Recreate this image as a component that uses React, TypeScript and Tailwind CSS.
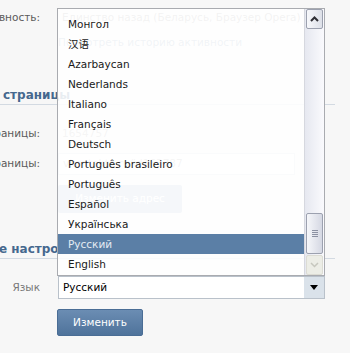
const LANGS = [
  'Монгол',
  '汉语',
  'Azarbaycan',
  'Nederlands',
  'Italiano',
  'Français',
  'Deutsch',
  'Português brasileiro',
  'Português',
  'Español',
  'Українська',
  'Русский',
  'English',
];

const FONT = { fontFamily: '"DejaVu Sans", "Noto Sans CJK SC", sans-serif' };

const Label = ({ text, className = '' }: { text: string; className?: string }) => (
  <div className={`flex w-[40px] shrink-0 justify-end overflow-hidden ${className}`}>
    <span className="shrink-0 whitespace-nowrap">{text}</span>
  </div>
);

const Scrollbar = () => (
  <div className="flex w-[20px] flex-col border-l border-[#d6d8df] bg-gradient-to-r from-[#e6e8f0] to-[#fafafd] pl-px pr-px">
    <div className="flex h-[20px] items-center justify-center rounded-[2px] border border-[#9ca1af] bg-gradient-to-r from-[#f7f8fb] to-[#dde0e8]">
      <svg width="9" height="6" viewBox="0 0 9 6">
        <path d="M1 5 L4.5 1.5 L8 5" fill="none" stroke="#2f2f35" strokeWidth="2" />
      </svg>
    </div>
    <div className="flex-1" />
    <div className="flex h-[41px] flex-col items-center justify-center gap-px rounded-[2px] border border-[#9ca1af] bg-gradient-to-r from-[#f6f7fa] to-[#d5d8e3]">
      <div className="h-px w-[6px] bg-[#8c91a2]" />
      <div className="h-px w-[6px] bg-[#8c91a2]" />
      <div className="h-px w-[6px] bg-[#8c91a2]" />
      <div className="h-px w-[6px] bg-[#8c91a2]" />
    </div>
    <div className="mt-px flex h-[20px] items-center justify-center rounded-[2px] border border-[#dcdcd4] bg-[#ecede6]">
      <svg width="9" height="6" viewBox="0 0 9 6">
        <path d="M1 1 L4.5 4.5 L8 1" fill="none" stroke="#c6c7be" strokeWidth="1.5" />
      </svg>
    </div>
  </div>
);

export default function App() {
  return (
    <div className="relative h-[353px] w-[350px] overflow-hidden bg-[#f7f7f7] text-[10.5px]" style={FONT}>
      <div className="w-[335px]">
        {/* Активность */}
        <div className="mt-[10px] flex h-[14px] items-center gap-[18px] leading-[14px] text-[#5a5a5a]">
          <Label text="Активность:" />
          <span className="pl-[4px] text-[#999]">Единство назад (Беларусь, Браузер Opera)</span>
        </div>
        <div className="mt-[11px] flex h-[14px] items-center leading-[14px]">
          <span className="pl-[58px] text-[#8aa0b8]">Посмотреть историю активности</span>
        </div>

        {/* Адрес страницы */}
        <div className="mt-[37px] h-[19px] border-b border-[#d3dae2] text-[12px] font-bold leading-[18px] text-[#45688e]">
          <span className="ml-[3px]">страницы</span>
        </div>
        <div className="mt-[21px] flex h-[14px] items-center gap-[18px] leading-[14px] text-[#5a5a5a]">
          <Label text="Номер страницы:" />
          <span className="pl-[4px] text-[#aaa]">1654757</span>
        </div>
        <div className="mt-[13px] flex h-[22px] items-center gap-[18px] text-[#5a5a5a]">
          <Label text="Адрес страницы:" />
          <div className="flex h-[22px] w-[237px] items-center border border-[#d3dae2] bg-white pl-[4px] text-[#aaa]">
            vkontakte.ru/id163787
          </div>
        </div>
        <div className="mt-[10px] flex h-[28px] pl-[58px]">
          <div className="flex w-[124px] items-center justify-center rounded-[2px] bg-[#a8bbd0] text-white">
            Изменить адрес
          </div>
        </div>

        {/* Другие настройки */}
        <div className="mt-[27px] h-[19px] border-b border-[#d3dae2] text-[12px] font-bold leading-[18px] text-[#45688e]">
          <span className="-ml-[1px]">е настройки</span>
        </div>
        <div className="mt-[17px] flex h-[23px] items-center gap-[18px] text-[#777]">
          <Label text="Язык" />
          <div className="flex h-[23px] w-[267px] items-center border border-[#b9c1ca] bg-white text-black">
            <span className="flex-1 pl-[4px]">Русский</span>
            <div className="flex h-full w-[20px] items-center justify-center bg-[#dae2ea]">
              <svg width="8" height="5" viewBox="0 0 8 5">
                <path d="M0 0 H8 L4 5 Z" fill="#000" />
              </svg>
            </div>
          </div>
        </div>
        <div className="mt-[10px] pl-[57px]">
          <button
            type="button"
            className="flex h-[27px] w-[86px] items-center justify-center rounded-[2px] border border-[#4a6d95] bg-gradient-to-b from-[#6b8db3] to-[#4f739b] text-white"
          >
            Изменить
          </button>
        </div>
      </div>

      {/* Open language list */}
      <div className="absolute left-[57px] top-[8px] flex h-[268px] w-[268px] border border-[#a9abb0] bg-white/[0.88]">
        <div className="flex-1 pt-[5px]">
          {LANGS.map((lang) => (
            <div
              key={lang}
              className={`h-[20px] whitespace-nowrap pl-[10px] leading-[20px] ${
                lang === 'Русский' ? 'bg-[#5b7fa6] text-[#e4ebf3]' : 'text-[#1a1a1a]'
              }`}
            >
              {lang}
            </div>
          ))}
        </div>
        <Scrollbar />
      </div>
    </div>
  );
}
